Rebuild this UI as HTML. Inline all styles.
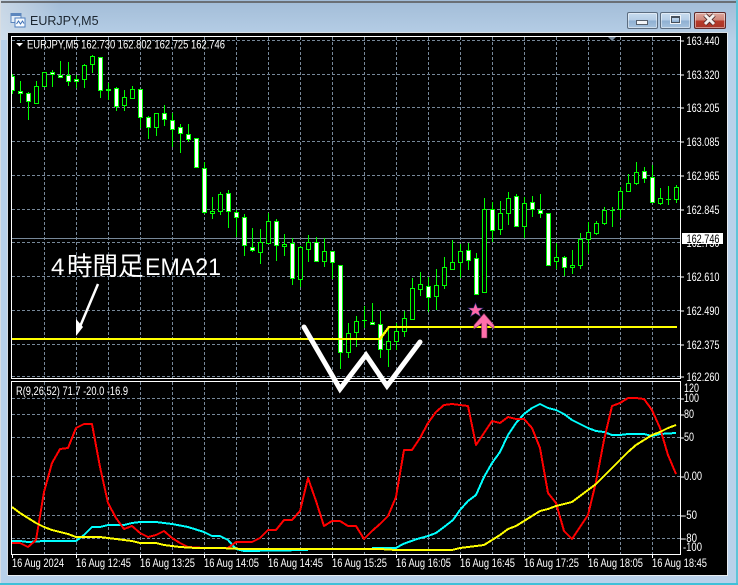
<!DOCTYPE html>
<html lang="ja"><head><meta charset="utf-8"><title>EURJPY,M5</title>
<style>
html,body{margin:0;padding:0;background:#fff}
#w{position:relative;width:738px;height:585px;overflow:hidden;background:#b9d1ea;font-family:"Liberation Sans","Noto Sans CJK JP",sans-serif}
#t{position:absolute;left:0;top:0;width:738px;height:40px;background:linear-gradient(90deg,rgba(225,232,238,.6),rgba(225,232,238,0) 60px),linear-gradient(#a2bcd7,#b8d0e8)}
#e1{position:absolute;left:0;top:1px;width:738px;height:2px;background:#6a6f75}
#e2{position:absolute;left:0;top:0;width:1px;height:585px;background:#d8dde2}
#e3{position:absolute;left:736px;top:0;width:2px;height:585px;background:#5fc4d8}
#e4{position:absolute;left:0;top:583px;width:738px;height:2px;background:#3fc0d8}
#c{position:absolute;left:7px;top:32px;width:721px;height:544px;background:#000;box-shadow:inset 1px 1px 0 #d5dbe2,inset -1px -1px 0 #e8edf2}
#ttl{position:absolute;left:30px;top:14px;font-size:12.5px;color:#1c2630;line-height:15px;white-space:nowrap}
.b{position:absolute;top:12px;height:15px;border:1px solid #5c6d80;border-radius:2px;box-sizing:content-box;box-shadow:inset 0 0 0 1px rgba(255,255,255,.45)}
.bl{background:linear-gradient(#c8dcef 0,#b4cde6 48%,#8fb0d2 52%,#a6c3de 100%)}
.br{background:linear-gradient(#dca79d 0,#cf8578 48%,#b73b2a 52%,#a93527 100%);border-color:#5e2a2a}
svg{position:absolute;left:0;top:0}
</style></head><body><div id="w">
<div id="t"></div><div id="e1"></div><div id="e2"></div><div id="e3"></div><div id="e4"></div>
<svg width="16" height="16" style="left:10px;top:12px" viewBox="0 0 16 16"><rect x="1" y="1.5" width="10" height="9" fill="#e4eef8" stroke="#5c86bd"/><rect x="1" y="1.5" width="10" height="2.5" fill="#5c86bd"/><rect x="5" y="6" width="10" height="9" fill="#f6fafd" stroke="#4f7fbe"/><path d="M6.5 12l2-3 2 3 2-3 1.5 2.5" fill="none" stroke="#3c6fb5"/></svg>
<div id="ttl">EURJPY,M5</div>
<div class="b bl" style="left:627px;width:29px"></div><div style="position:absolute;left:636px;top:20px;width:10px;height:3px;background:#f2f5f8;border:1px solid #56606c"></div>
<div class="b bl" style="left:660px;width:29px"></div><div style="position:absolute;left:671px;top:16px;width:7px;height:4px;border:1px solid #46505c;border-top-width:2px;outline:1px solid #f0f4f8"></div>
<div class="b br" style="left:694px;width:30px"></div>
<svg width="16" height="14" style="left:702px;top:12px" viewBox="0 0 16 14"><path d="M3 3l9 9M12 3l-9 9" stroke="#4a2a2a" stroke-width="4.5"/><path d="M3 3l9 9M12 3l-9 9" stroke="#f4f0ee" stroke-width="3"/></svg>
<div id="c"></div>

<svg width="738" height="585" viewBox="0 0 738 585" font-family="'Liberation Sans','Noto Sans CJK JP',sans-serif">
<defs><clipPath id="m"><rect x="12" y="37" width="668" height="341"/></clipPath></defs>
<!-- grid -->
<g stroke="#778899" stroke-width="1" stroke-dasharray="3 2" shape-rendering="crispEdges" fill="none">
<path d="M12 40.5H680M12 74.5H680M12 107.5H680M12 141.5H680M12 175.5H680M12 209.5H680M12 242.5H680M12 276.5H680M12 310.5H680M12 344.5H680M12 376.5H680"/>
<path d="M44.5 37V378M76.5 37V378M108.5 37V378M140.5 37V378M172.5 37V378M204.5 37V378M236.5 37V378M268.5 37V378M300.5 37V378M332.5 37V378M364.5 37V378M396.5 37V378M428.5 37V378M460.5 37V378M492.5 37V378M524.5 37V378M556.5 37V378M588.5 37V378M620.5 37V378M652.5 37V378"/>
<path d="M12 398.5H680M12 414.5H680M12 437.5H680M12 476.5H680M12 515.5H680M12 538.5H680"/>
<path d="M44.5 382V554M76.5 382V554M108.5 382V554M140.5 382V554M172.5 382V554M204.5 382V554M236.5 382V554M268.5 382V554M300.5 382V554M332.5 382V554M364.5 382V554M396.5 382V554M428.5 382V554M460.5 382V554M492.5 382V554M524.5 382V554M556.5 382V554M588.5 382V554M620.5 382V554M652.5 382V554"/>
</g>
<path d="M12 238.500H680" stroke="#778899" shape-rendering="crispEdges"/>
<path d="M608 37h8l-4 4z" fill="#778899"/>
<!-- candles -->
<g clip-path="url(#m)" shape-rendering="crispEdges" stroke="#00ff00" stroke-width="1">
<path fill="none" d="M12.5 74V94M20.5 81V103M28.5 92V120M36.5 81V104M44.5 72V87M52.5 70V87M60.5 61V78M68.5 62V86M76.5 75V88M84.5 64V88M92.5 55V73M100.5 57V98M108.5 83V100M116.5 87V111M124.5 90V111M132.5 86V99M140.5 89V128M148.5 116V139M156.5 113V136M164.5 105V126M172.5 113V147M180.5 124V153M188.5 124V142M196.5 138V167M204.5 162V214M212.5 197V219M220.5 192V215M228.5 190V228M236.5 210V237M244.5 214V256M252.5 228V252M260.5 229V264M268.5 213V243M276.5 219V261M284.5 234V256M292.5 238V285M300.5 246V287M308.5 235V262M316.5 237V262M324.5 238V267M332.5 251V279M340.5 265V369M348.5 323V358M356.5 316V347M364.5 306V328M372.5 303V323M380.5 311V358M388.5 330V367M396.5 323V350M404.5 311V337M412.5 278V319M420.5 272V296M428.5 277V312M436.5 269V310M444.5 257V289M452.5 240V269M460.5 244V278M468.5 243V270M476.5 253V295M484.5 198V292M492.5 202V242M500.5 201V235M508.5 192V225M516.5 194V227M524.5 197V238M532.5 196V217M540.5 194V218M548.5 213V266M556.5 243V269M564.5 256V276M572.5 250V274M580.5 233V269M588.5 222V254M596.5 221V235M604.5 207V225M612.5 207V227M620.5 187V218M628.5 174V191M636.5 162V185M644.5 167V183M652.5 165V203M660.5 188V205M668.5 186V205M676.5 185V203"/>
<path fill="#000" d="M34.5 86.5h4v17h-4zM42.5 72.5h4v14h-4zM82.5 65.5h4v14h-4zM90.5 56.5h4v8h-4zM122.5 97.5h4v8h-4zM130.5 89.5h4v9h-4zM154.5 113.5h4v14h-4zM210.5 211.5h4v2h-4zM218.5 194.5h4v17h-4zM258.5 242.5h4v10h-4zM266.5 221.5h4v22h-4zM282.5 244.5h4v2h-4zM298.5 247.5h4v32h-4zM306.5 242.5h4v7h-4zM322.5 251.5h4v10h-4zM346.5 333.5h4v19h-4zM354.5 321.5h4v11h-4zM386.5 341.5h4v8h-4zM394.5 331.5h4v10h-4zM402.5 318.5h4v13h-4zM410.5 288.5h4v31h-4zM418.5 284.5h4v5h-4zM434.5 285.5h4v11h-4zM442.5 267.5h4v18h-4zM450.5 262.5h4v7h-4zM458.5 251.5h4v11h-4zM482.5 209.5h4v83h-4zM498.5 213.5h4v16h-4zM506.5 198.5h4v15h-4zM522.5 203.5h4v23h-4zM554.5 257.5h4v4h-4zM570.5 265.5h4v2h-4zM578.5 239.5h4v26h-4zM586.5 232.5h4v7h-4zM594.5 223.5h4v10h-4zM602.5 210.5h4v13h-4zM618.5 191.5h4v18h-4zM626.5 183.5h4v8h-4zM634.5 172.5h4v11h-4zM658.5 198.5h4v5h-4zM674.5 187.5h4v12h-4z"/>
<path fill="#fff" d="M10.5 76.5h4v14h-4zM18.5 91.5h4v2h-4zM26.5 93.5h4v8h-4zM50.5 72.5h4v2h-4zM58.5 75.5h4v2h-4zM66.5 75.5h4v6h-4zM74.5 79.5h4v2h-4zM98.5 57.5h4v33h-4zM106.5 89.5h4v1h-4zM114.5 88.5h4v18h-4zM138.5 89.5h4v28h-4zM146.5 117.5h4v10h-4zM162.5 113.5h4v6h-4zM170.5 120.5h4v9h-4zM178.5 127.5h4v6h-4zM186.5 134.5h4v5h-4zM194.5 138.5h4v29h-4zM202.5 168.5h4v44h-4zM226.5 193.5h4v18h-4zM234.5 212.5h4v5h-4zM242.5 217.5h4v28h-4zM250.5 247.5h4v3h-4zM274.5 221.5h4v24h-4zM290.5 243.5h4v35h-4zM314.5 242.5h4v19h-4zM330.5 251.5h4v11h-4zM338.5 265.5h4v87h-4zM370.5 322.5h4v2h-4zM378.5 324.5h4v25h-4zM426.5 286.5h4v11h-4zM466.5 250.5h4v10h-4zM474.5 258.5h4v36h-4zM490.5 209.5h4v21h-4zM514.5 196.5h4v30h-4zM530.5 202.5h4v7h-4zM538.5 210.5h4v3h-4zM546.5 213.5h4v52h-4zM562.5 257.5h4v10h-4zM642.5 171.5h4v7h-4zM650.5 177.5h4v25h-4z"/>
<path fill="none" d="M362 320.5h5M610 210.5h5M666 199.5h5"/>
</g>
<!-- yellow EMA -->
<path d="M12 339H380L389 327H677" fill="none" stroke="#ffff00" stroke-width="2.4" shape-rendering="crispEdges"/>
<!-- W -->
<path d="M304 327L340 389L366 355L387 386L420 342" fill="none" stroke="#fff" stroke-width="5" stroke-linejoin="miter" stroke-linecap="round"/>
<!-- annotation -->
<text x="51" y="275" font-size="24" fill="#fff">4</text>
<text x="67" y="275" font-size="25.500" fill="#fff">時間足</text>
<text x="145" y="275" font-size="24" fill="#fff" textLength="76" lengthAdjust="spacingAndGlyphs">EMA21</text>
<path d="M98 284L79 329" stroke="#fff" stroke-width="2.500" fill="none"/><path d="M76 336L76 319L83 327Z" fill="#fff"/>
<!-- star and arrow -->
<path d="M475.500 303L477.500 308H483L478.700 311.300L480.500 316.500L475.500 313.300L470.500 316.500L472.300 311.300L468 308H473.500Z" fill="#ff69aa" stroke="#2b2f7a" stroke-width=".6"/>
<path d="M484 313.500L494 325V329L487 323.500V338H481.500V323.500L474 329V325Z" fill="#ff6fab" stroke="#7a2b55" stroke-width=".6"/>
<!-- frames -->
<g stroke="#fff" fill="none" shape-rendering="crispEdges">
<path d="M11.500 36.500H680.500V378.500H11.500Z"/>
<path d="M11.500 381.500H680.500V554.500H11.500Z"/>
<path d="M680.500 41H684M680.500 75H684M680.500 108H684M680.500 142H684M680.500 176H684M680.500 210H684M680.500 277H684M680.500 311H684M680.500 345H684M680.500 377H684M680.500 399H684M680.500 415H684M680.500 438H684M680.500 477H684M680.500 516H684M680.500 539H684"/>
<path d="M12.500 554V558M76.500 554V558M140.500 554V558M204.500 554V558M268.500 554V558M332.500 554V558M396.500 554V558M460.500 554V558M524.500 554V558M588.500 554V558M652.500 554V558"/>
</g>
<!-- indicator lines -->
<g fill="none" stroke-width="2" stroke-linejoin="round" shape-rendering="crispEdges">
<path stroke="#00ffff" d="M12 541L20 541L28 542L44 541L76 541L84 535L92 527L100 527L108 525L124 525L132 523L140 522L156 522L172 524L188 527L204 532L212 536L220 536L228 540L236 549L244 551L308 550M372 548L396 548L403 544L417 539L428 536L436 533L444 527L453 520L460 510L468 501L476 495L484 477L492 463L500 452L508 435L516 423L524 414L532 408L540 404L548 408L556 410L564 414L572 420L580 424L588 428L596 431L604 432L612 435L620 435L628 434L644 434L652 436L660 434L676 433"/>
<path stroke="#ff0000" d="M12 543L20 543L28 547L36 540L44 492L52 463L60 449L68 448L76 428L84 424L92 424L100 467L108 503L116 518L124 529L132 526L140 533L148 537L156 535L164 531L172 538L180 543L188 547L204 548L228 548L236 542L252 542L260 538L268 530L276 530L284 520L292 520L300 511L308 478L316 501L324 526L332 521L340 521L348 526L356 526L364 539L372 531L380 524L388 516L396 497L404 450L412 450L420 438L428 423L436 412L444 405L452 404L468 406L476 445L484 433L492 421L500 423L508 417L516 419L524 419L532 428L540 448L548 493L556 503L564 531L572 539L580 527L588 515L596 482L604 440L612 406L620 403L628 398L636 398L644 399L652 410L660 428L668 455L676 474"/>
<path stroke="#ffff00" d="M12 507L20 513L28 518L36 523L44 527L52 530L60 532L68 534L76 537L100 537L108 538L116 539L124 540L132 541L140 543L156 543L164 545L180 547L196 548L220 548L244 549L380 549L396 550L452 550L460 548L476 546L484 545L492 540L500 535L508 529L516 526L524 521L532 516L540 511L548 509L556 506L564 504L572 502L580 496L588 490L596 484L604 476L612 468L620 460L628 452L636 445L644 440L652 435L660 432L668 428L676 425"/>
</g>
<!-- texts -->
<path d="M16 43h7l-3.500 3.500z" fill="#fff"/>
<g fill="#fff" font-size="12">
<text x="27" y="48.500" textLength="198" lengthAdjust="spacingAndGlyphs">EURJPY,M5  162.730 162.802 162.725 162.746</text>
<text x="16" y="395" textLength="112" lengthAdjust="spacingAndGlyphs">R(9,26,52) 71.7 -20.0 -16.9</text>
<g>
<text x="686.500" y="45" textLength="33" lengthAdjust="spacingAndGlyphs">163.440</text>
<text x="686.500" y="79" textLength="33" lengthAdjust="spacingAndGlyphs">163.320</text>
<text x="686.500" y="112" textLength="33" lengthAdjust="spacingAndGlyphs">163.205</text>
<text x="686.500" y="146" textLength="33" lengthAdjust="spacingAndGlyphs">163.085</text>
<text x="686.500" y="180" textLength="33" lengthAdjust="spacingAndGlyphs">162.965</text>
<text x="686.500" y="214" textLength="33" lengthAdjust="spacingAndGlyphs">162.845</text>
<text x="686.500" y="247" textLength="33" lengthAdjust="spacingAndGlyphs">162.730</text>
<text x="686.500" y="281" textLength="33" lengthAdjust="spacingAndGlyphs">162.610</text>
<text x="686.500" y="315" textLength="33" lengthAdjust="spacingAndGlyphs">162.490</text>
<text x="686.500" y="349" textLength="33" lengthAdjust="spacingAndGlyphs">162.375</text>
<text x="686.500" y="381" textLength="33" lengthAdjust="spacingAndGlyphs">162.260</text>
</g>
<rect x="682" y="233" width="41" height="11" fill="#fff"/>
<text x="686.500" y="243" fill="#000" textLength="33" lengthAdjust="spacingAndGlyphs">162.746</text>
<text x="684" y="392" textLength="15" lengthAdjust="spacingAndGlyphs">120</text>
<text x="684" y="402" textLength="15" lengthAdjust="spacingAndGlyphs">100</text>
<text x="684" y="418" textLength="10" lengthAdjust="spacingAndGlyphs">80</text>
<text x="684" y="441" textLength="10" lengthAdjust="spacingAndGlyphs">50</text>
<text x="684" y="480" textLength="18" lengthAdjust="spacingAndGlyphs">0.00</text>
<text x="683" y="519" textLength="14" lengthAdjust="spacingAndGlyphs">-50</text>
<text x="683" y="542" textLength="14" lengthAdjust="spacingAndGlyphs">-80</text>
<text x="683" y="551" textLength="19" lengthAdjust="spacingAndGlyphs">-100</text>
<text x="12" y="567" textLength="52" lengthAdjust="spacingAndGlyphs">16 Aug 2024</text>
<text x="76" y="567" textLength="55" lengthAdjust="spacingAndGlyphs">16 Aug 12:45</text>
<text x="140" y="567" textLength="55" lengthAdjust="spacingAndGlyphs">16 Aug 13:25</text>
<text x="204" y="567" textLength="55" lengthAdjust="spacingAndGlyphs">16 Aug 14:05</text>
<text x="268" y="567" textLength="55" lengthAdjust="spacingAndGlyphs">16 Aug 14:45</text>
<text x="332" y="567" textLength="55" lengthAdjust="spacingAndGlyphs">16 Aug 15:25</text>
<text x="396" y="567" textLength="55" lengthAdjust="spacingAndGlyphs">16 Aug 16:05</text>
<text x="460" y="567" textLength="55" lengthAdjust="spacingAndGlyphs">16 Aug 16:45</text>
<text x="524" y="567" textLength="55" lengthAdjust="spacingAndGlyphs">16 Aug 17:25</text>
<text x="588" y="567" textLength="55" lengthAdjust="spacingAndGlyphs">16 Aug 18:05</text>
<text x="652" y="567" textLength="55" lengthAdjust="spacingAndGlyphs">16 Aug 18:45</text>
</g>
</svg>
</div></body></html>
